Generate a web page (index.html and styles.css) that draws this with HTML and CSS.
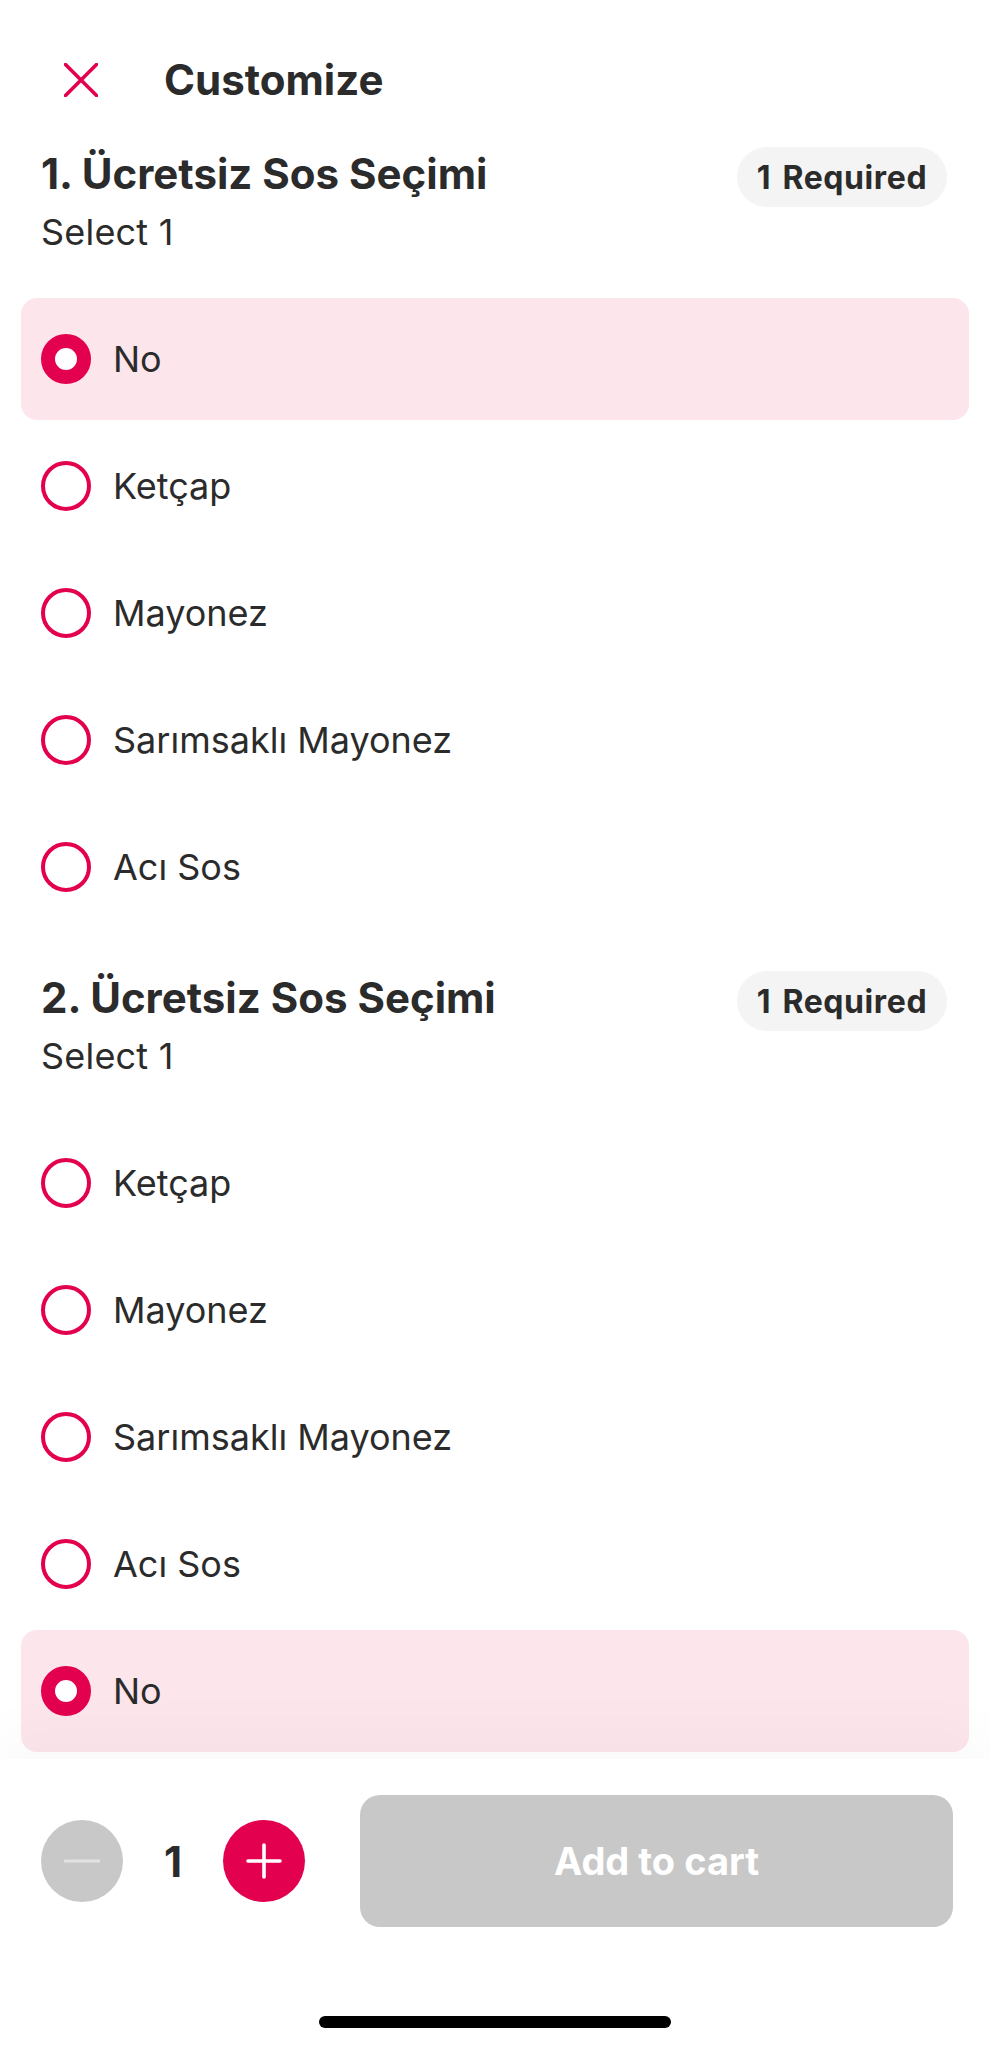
FILE: index.html
```html
<!DOCTYPE html>
<html lang="tr">
<head>
<meta charset="utf-8">
<title>Customize</title>
<link rel="stylesheet" href="styles.css">
</head>
<body>
<div class="page">
  <header class="header">
    <svg class="close" width="34" height="34" viewBox="0 0 34 34"><path d="M1.5 1.5 L32.5 32.5 M32.5 1.5 L1.5 32.5" stroke="#e3004f" stroke-width="3.6" stroke-linecap="round" fill="none"/></svg>
    <h1 class="title">Customize</h1>
  </header>

  <main class="content">
    <section class="group">
      <div class="group-head">
        <h2 class="group-title">1. Ücretsiz Sos Seçimi</h2>
        <span class="badge">1 Required</span>
      </div>
      <p class="group-sub">Select 1</p>
      <ul class="options">
        <li class="option selected"><span class="radio"></span><span class="label">No</span></li>
        <li class="option"><span class="radio"></span><span class="label">Ketçap</span></li>
        <li class="option"><span class="radio"></span><span class="label">Mayonez</span></li>
        <li class="option"><span class="radio"></span><span class="label">Sarımsaklı Mayonez</span></li>
        <li class="option"><span class="radio"></span><span class="label">Acı Sos</span></li>
      </ul>
    </section>

    <section class="group">
      <div class="group-head">
        <h2 class="group-title">2. Ücretsiz Sos Seçimi</h2>
        <span class="badge">1 Required</span>
      </div>
      <p class="group-sub">Select 1</p>
      <ul class="options">
        <li class="option"><span class="radio"></span><span class="label">Ketçap</span></li>
        <li class="option"><span class="radio"></span><span class="label">Mayonez</span></li>
        <li class="option"><span class="radio"></span><span class="label">Sarımsaklı Mayonez</span></li>
        <li class="option"><span class="radio"></span><span class="label">Acı Sos</span></li>
        <li class="option selected"><span class="radio"></span><span class="label">No</span></li>
      </ul>
    </section>
  </main>

  <footer class="bottom-bar">
    <div class="counter">
      <button class="round minus" aria-label="Decrease">
        <svg width="36" height="6" viewBox="0 0 36 6"><path d="M1.5 3 H34.5" stroke="#e2e2e2" stroke-width="3.2" stroke-linecap="round"/></svg>
      </button>
      <span class="qty">1</span>
      <button class="round plus" aria-label="Increase">
        <svg width="36" height="36" viewBox="0 0 36 36"><path d="M2 18 H34 M18 2 V34" stroke="#ffffff" stroke-width="3.6" stroke-linecap="round"/></svg>
      </button>
    </div>
    <button class="add-btn">Add to cart</button>
  </footer>

  <div class="home-area"><span class="home-indicator"></span></div>
</div>
</body>
</html>
```

FILE: styles.css
```css
* { box-sizing: border-box; }

html, body {
  margin: 0;
  padding: 0;
  background: #ffffff;
}

body {
  font-family: Inter, "Noto Sans", "DejaVu Sans", sans-serif;
  color: #2b2b2b;
  width: 990px;
}

.page {
  display: flex;
  flex-direction: column;
  min-height: 2048px;
}

.header {
  display: flex;
  align-items: center;
  height: 80px;
  margin-top: 40px;
  padding-left: 64px;
}

.close { display: block; }

.title {
  margin: 0 0 0 66px;
  font-size: 42px;
  font-weight: 700;
  letter-spacing: 0;
  line-height: 48px;
}

.content {
  padding-top: 27px;
}

.group + .group {
  margin-top: 43px;
}

.group-head {
  display: flex;
  justify-content: space-between;
  align-items: flex-start;
  padding: 0 43px 0 41px;
  height: 60px;
}

.group-title {
  margin: 3px 0 0 0;
  font-size: 42px;
  line-height: 48px;
  font-weight: 700;
  letter-spacing: 0;
}

.badge {
  display: inline-flex;
  align-items: center;
  justify-content: center;
  height: 60px;
  width: 210px;
  border-radius: 30px;
  background: #f4f4f4;
  font-size: 32px;
  font-weight: 700;
  letter-spacing: 0.6px;
  word-spacing: 3px;
}

.group-sub {
  margin: 0;
  padding-left: 41px;
  font-size: 36px;
  line-height: 50px;
  font-weight: 400;
  letter-spacing: 0.2px;
}

.options {
  list-style: none;
  margin: 41px 21px 0 21px;
  padding: 0;
  display: flex;
  flex-direction: column;
  gap: 5px;
}

.option {
  display: flex;
  align-items: center;
  height: 122px;
  padding-left: 20px;
  border-radius: 16px;
}

.option.selected {
  background: #fde5ec;
}

.radio {
  width: 50px;
  height: 50px;
  border-radius: 50%;
  border: 4.5px solid #e3004f;
  flex: none;
  background: transparent;
}

.option.selected .radio {
  border-width: 14px;
  background: #ffffff;
}

.label {
  margin-left: 22px;
  font-size: 36px;
  line-height: 44px;
  letter-spacing: 0;
}

.bottom-bar {
  display: flex;
  align-items: center;
  margin-top: 7px;
  padding: 36px 37px 0 41px;
  background: #ffffff;
  box-shadow: 0 -30px 60px rgba(0, 0, 0, 0.025);
}

.counter {
  display: flex;
  align-items: center;
}

.round {
  width: 82px;
  height: 82px;
  border-radius: 50%;
  border: none;
  padding: 0;
  display: flex;
  align-items: center;
  justify-content: center;
}

.minus { background: #c8c8c8; }
.plus { background: #e3004f; }

.qty {
  width: 100px;
  text-align: center;
  font-size: 42px;
  font-weight: 700;
}

.add-btn {
  flex: 1;
  margin-left: 55px;
  height: 132px;
  border: none;
  border-radius: 20px;
  background: #c8c8c8;
  color: #ffffff;
  font-family: Inter, "Noto Sans", sans-serif;
  font-size: 38px;
  font-weight: 700;
  letter-spacing: 0;
}

.home-area {
  flex: 1;
  display: flex;
  justify-content: center;
  align-items: flex-start;
  padding-top: 89px;
}

.home-indicator {
  display: block;
  width: 352px;
  height: 12px;
  border-radius: 6px;
  background: #000000;
}
```
